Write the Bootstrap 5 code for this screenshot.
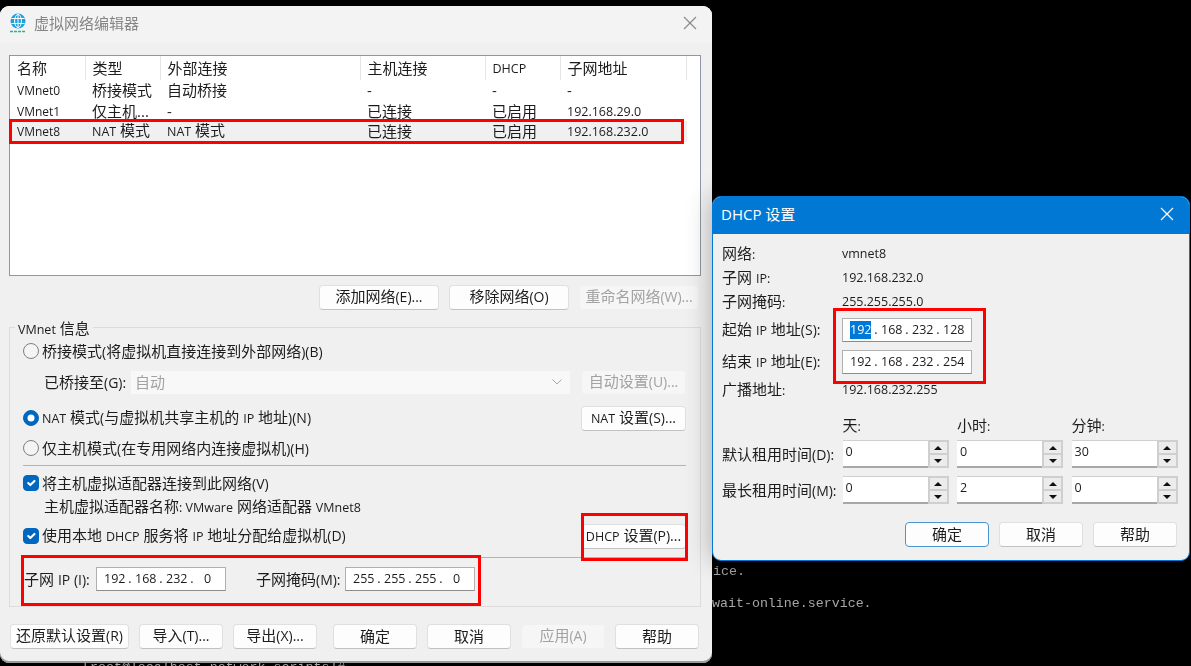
<!DOCTYPE html>
<html lang="zh-CN">
<head>
  <meta charset="UTF-8">
  <title>虚拟网络编辑器</title>
  <link href="https://cdn.jsdelivr.net/npm/bootstrap@5.3.0/dist/css/bootstrap.min.css" rel="stylesheet">
  <style>
    html, body { height: 100%; }
    body {
      background: #000; overflow: hidden; color: #1c1c1c;
      font-family: "Open Sans", "Noto Sans CJK SC", sans-serif; font-size: 15px; line-height: 20px;
    }
    .lat { font-size: 12.5px; }
    .lat-s { font-size: 12px; }
    .acc { font-size: 14px; }

    /* the whole screenshot is a little soft */
    .win, .term-line { filter: blur(.3px); }

    /* desktop */
    .term-line { position: absolute; color: #a6a6a6; font: 13.3px/16px "Liberation Mono", monospace; white-space: pre; }
    .term-a { left: 713px; top: 564px; }
    .term-b { left: 712px; top: 596px; }
    .term-c { left: 82px; top: 660px; }
    .win { position: absolute; background: #f0f0f0; }
    .win-main { left: 0; top: 6px; width: 712px; height: 657px; border-radius: 9px; overflow: hidden; box-shadow: inset 0 -2px 0 #9a9a9a; }
    .win-dhcp { left: 712px; top: 196px; width: 478px; height: 365px; border-radius: 9px; overflow: hidden; border: 1px solid #0078d4; box-shadow: 0 0 26px rgba(0,0,0,.3); }
    .title-main { height: 37px; background: #f3f3f3; color: #858585; padding: 0 15px 3px 10px; }
    .title-dhcp { height: 37px; background: #0078d4; color: #fff; padding: 0 15px 3px 8px; }
    .title-text-main { margin-left: 8px; }
    .close-x { display: block; }

    /* main window */
    .main-body { padding: 12px 11px 0 9px; }
    .net-list { height: 221px; background: #fff; border: 1px solid #8f97a6; }
    .net-table { table-layout: fixed; width: 677px; margin: 0; border-collapse: collapse; white-space: nowrap; }
    .net-table th, .net-table td { padding: 0 0 0 7px; font-weight: 400; overflow: hidden; }
    .net-table th { height: 24px; border-right: 1px solid #e5e5e5; }
    .net-table td { height: 20.5px; line-height: 16px; }
    .net-table .sel-row td { background: #f0f0f0; }
    .col-name { width: 75px; }
    .col-kind { width: 75px; }
    .col-ext { width: 200px; }
    .col-host { width: 125px; }
    .col-dhcp { width: 75px; }

    .win-btn {
      height: 25px; padding: 0 0 2px; background: #fdfdfd; color: #1c1c1c; font-size: 15px; line-height: 20px;
      border: 1px solid #e0e0e0; border-bottom-color: #c2c2c2; border-radius: 4px; white-space: nowrap;
    }
    .win-btn:disabled { background: #f6f6f6; color: #a2a2a2; border-color: #f0f0f0; opacity: 1; }
    .win-btn-def { border: 1.5px solid #4a94d0; }
    .w-120 { width: 120px; }
    .w-119 { width: 119px; }
    .w-105 { width: 105px; }
    .w-84 { width: 84px; }
    .list-actions { margin: 9px 2px 0 0; gap: 10px; }

    .group-box { position: relative; height: 280px; margin-top: 17px; border: 1px solid #dcdcdc; padding: 11px 14px 0 13px; }
    .group-legend { position: absolute; left: 5px; top: -10px; padding: 0 3px; background: #f0f0f0; }
    .opt-row { height: 24px; }
    .opt-input.form-check-input { width: 16px; height: 16px; margin: 0 3px 0 0; flex: none; background-color: #f4f4f4; border: 1.5px solid #7f7f7f; }
    .opt-input.form-check-input:checked { background-color: #0067c0; border-color: #0067c0; }
    .opt-input[type=checkbox] { border-radius: 4px; }
    .mt-7 { margin-top: 7px; }
    .mt-12 { margin-top: 12px; }
    .mt-6 { margin-top: 6px; }
    .mt-5p { margin-top: 5px; }
    .indent { padding-left: 21px; }
    .sep-line { height: 1px; background: #b4b4b4; margin: 5px 0; opacity: 1; }
    .sep-low { margin: 9px 0 9px; }
    .lbl-bridge { width: 87px; flex: none; }
    .fake-select { width: 439px; height: 23px; padding-left: 4px; background: #f8f8f8; color: #a2a2a2; }
    .ip-box { width: 130px; height: 24px; padding-left: 7px; background: #fff; border: 1px solid #b0b0b0; border-bottom-color: #8c8c8c; font-size: 12.5px; }
    .octet { width: 21px; text-align: center; }
    .octet-dot { width: 10px; text-align: center; }
    .octet-sel { background: #0078d7; color: #fff; line-height: 18px; }
    .subnet-row { margin-left: 1px; }
    .lbl-ip { width: 72px; white-space: nowrap; }
    .lbl-mask { width: 89px; margin-left: 30px; white-space: nowrap; }
    .main-footer { margin-top: 17px; padding-left: 1px; gap: 10px; }
    .gap-extra { margin-left: 6px; }

    /* red marks drawn on the screenshot */
    .red-box { position: absolute; border: 3px solid #f00; pointer-events: none; }
    .red-row { left: 9px; top: 113px; width: 675px; height: 25px; }
    .red-dhcp-btn { left: 581px; top: 507px; width: 107px; height: 48px; }
    .red-subnet { left: 21px; top: 549px; width: 460px; height: 51px; }
    .red-range { left: 120px; top: 111px; width: 153px; height: 76px; }

    /* dhcp window */
    .dhcp-body { padding: 8px 9px 0 9px; }
    .info-row { height: 24px; }
    .info-key { width: 120px; flex: none; }
    .info-val { font-size: 12.5px; }
    .mt-8p { margin-top: 8px; }
    .mt-4p { margin-top: 4px; }
    .lease-grid { display: grid; grid-template-columns: 112px 106px 106px 106px; column-gap: 8.5px; margin-top: 13px; align-items: center; }
    .lease-head { height: 25px; }
    .spin-wrap { height: 28px; background: #cfcfcf; }
    .spin-field { flex: 1; background: #fff; border-bottom: 2px solid #a8a8a8; padding: 1px 3px; font-size: 12.5px; margin: 1px 0 0; }
    .spin-btns { width: 21px; padding: 2px; gap: 2px; }
    .spin-btn { flex: 1; background: #ececec; }
    .tri-up { width: 0; height: 0; border: 4.5px solid transparent; border-top: 0; border-bottom: 4.5px solid #111; }
    .tri-down { width: 0; height: 0; border: 4.5px solid transparent; border-bottom: 0; border-top: 4.5px solid #111; }
    .row-gap { margin-top: 8px; }
    .lease-label { white-space: nowrap; }
    .dhcp-footer { margin: 18px 3px 0 0; gap: 10px; }
  </style>
</head>
<body>
  <div class="term-line term-a">ice.</div>
  <div class="term-line term-b">wait-online.service.</div>
  <div class="term-line term-c">[root@localhost network-scripts]#</div>

  <div class="win win-main">
    <div class="title-main d-flex align-items-center">
      <svg width="16" height="20" viewBox="0 0 16 20">
        <circle cx="8" cy="8" r="7.5" fill="#1aa0dc"/>
        <ellipse cx="8" cy="8" rx="3.4" ry="6.6" fill="none" stroke="#fff" stroke-width="1"/>
        <path d="M1.4 5.500h13.2M1.4 10.500h13.2M8 1v14" stroke="#fff" stroke-width="1" fill="none"/>
        <path d="M0 18.500h16" stroke="#3aa99a" stroke-width="1.6" stroke-dasharray="3 1" fill="none"/>
      </svg>
      <span class="title-text-main flex-grow-1">虚拟网络编辑器</span>
      <svg class="close-x" width="14" height="14" viewBox="0 0 14 14"><path d="M1 1l12 12M13 1L1 13" stroke="#8a8a8a" stroke-width="1.2" fill="none"/></svg>
    </div>

    <div class="main-body">
      <div class="net-list">
        <table class="net-table">
          <colgroup>
            <col class="col-name"><col class="col-kind"><col class="col-ext"><col class="col-host"><col class="col-dhcp"><col>
          </colgroup>
          <thead>
            <tr><th>名称</th><th>类型</th><th>外部连接</th><th>主机连接</th><th><span class="lat">DHCP</span></th><th>子网地址</th></tr>
          </thead>
          <tbody>
            <tr><td><span class="lat-s">VMnet0</span></td><td>桥接模式</td><td>自动桥接</td><td>-</td><td>-</td><td>-</td></tr>
            <tr><td><span class="lat-s">VMnet1</span></td><td>仅主机...</td><td>-</td><td>已连接</td><td>已启用</td><td><span class="lat">192.168.29.0</span></td></tr>
            <tr class="sel-row"><td><span class="lat-s">VMnet8</span></td><td><span class="lat">NAT</span> 模式</td><td><span class="lat">NAT</span> 模式</td><td>已连接</td><td>已启用</td><td><span class="lat">192.168.232.0</span></td></tr>
          </tbody>
        </table>
      </div>

      <div class="list-actions d-flex justify-content-end">
        <button class="btn win-btn w-120">添加网络<span class="acc">(E)...</span></button>
        <button class="btn win-btn w-120">移除网络<span class="acc">(O)</span></button>
        <button class="btn win-btn w-120" disabled>重命名网络<span class="acc">(W)...</span></button>
      </div>

      <div class="group-box">
        <span class="group-legend"><span class="lat">VMnet</span> 信息</span>

        <div class="opt-row d-flex align-items-center">
          <input class="form-check-input opt-input" type="radio" name="mode">
          <span>桥接模式<span class="acc">(</span>将虚拟机直接连接到外部网络<span class="acc">)(B)</span></span>
        </div>
        <div class="opt-row indent mt-7 d-flex align-items-center">
          <span class="lbl-bridge">已桥接至<span class="acc">(G):</span></span>
          <div class="fake-select d-flex align-items-center justify-content-between">
            <span>自动</span>
            <svg width="10" height="6" viewBox="0 0 10 6" class="me-2"><path d="M.5.5L5 5 9.500.5" stroke="#a8a8a8" fill="none"/></svg>
          </div>
          <button class="btn win-btn w-105 ms-auto" disabled>自动设置<span class="acc">(U)...</span></button>
        </div>
        <div class="opt-row mt-12 d-flex align-items-center">
          <input class="form-check-input opt-input" type="radio" name="mode" checked>
          <span><span class="lat">NAT</span> 模式<span class="acc">(</span>与虚拟机共享主机的 <span class="lat">IP</span> 地址<span class="acc">)(N)</span></span>
          <button class="btn win-btn w-105 ms-auto"><span class="lat">NAT</span> 设置<span class="acc">(S)...</span></button>
        </div>
        <div class="opt-row mt-6 d-flex align-items-center">
          <input class="form-check-input opt-input" type="radio" name="mode">
          <span>仅主机模式<span class="acc">(</span>在专用网络内连接虚拟机<span class="acc">)(H)</span></span>
        </div>

        <div class="sep-line"></div>

        <div class="opt-row d-flex align-items-center">
          <input class="form-check-input opt-input" type="checkbox" checked>
          <span>将主机虚拟适配器连接到此网络<span class="acc">(V)</span></span>
        </div>
        <div class="opt-row indent d-flex align-items-center">
          <span>主机虚拟适配器名称<span class="lat">: VMware</span> 网络适配器 <span class="lat">VMnet8</span></span>
        </div>
        <div class="opt-row mt-5p d-flex align-items-center">
          <input class="form-check-input opt-input" type="checkbox" checked>
          <span>使用本地 <span class="lat">DHCP</span> 服务将 <span class="lat">IP</span> 地址分配给虚拟机<span class="acc">(D)</span></span>
          <button class="btn win-btn w-105 ms-auto"><span class="lat">DHCP</span> 设置<span class="acc">(P)...</span></button>
        </div>

        <div class="sep-line sep-low"></div>

        <div class="subnet-row d-flex align-items-center">
          <span class="lbl-ip">子网 <span class="acc">IP (I):</span></span>
          <div class="ip-box d-flex align-items-center">
            <span class="octet">192</span><span class="octet-dot">.</span><span class="octet">168</span><span class="octet-dot">.</span><span class="octet">232</span><span class="octet-dot">.</span><span class="octet">0</span>
          </div>
          <span class="lbl-mask">子网掩码<span class="acc">(M):</span></span>
          <div class="ip-box d-flex align-items-center">
            <span class="octet">255</span><span class="octet-dot">.</span><span class="octet">255</span><span class="octet-dot">.</span><span class="octet">255</span><span class="octet-dot">.</span><span class="octet">0</span>
          </div>
        </div>
      </div>

      <div class="main-footer d-flex">
        <button class="btn win-btn w-119">还原默认设置<span class="acc">(R)</span></button>
        <button class="btn win-btn w-84">导入<span class="acc">(T)...</span></button>
        <button class="btn win-btn w-84">导出<span class="acc">(X)...</span></button>
        <button class="btn win-btn w-84 gap-extra">确定</button>
        <button class="btn win-btn w-84">取消</button>
        <button class="btn win-btn w-84" disabled>应用<span class="acc">(A)</span></button>
        <button class="btn win-btn w-84">帮助</button>
      </div>
    </div>

    <div class="red-box red-row"></div>
    <div class="red-box red-dhcp-btn"></div>
    <div class="red-box red-subnet"></div>
  </div>

  <div class="win win-dhcp">
    <div class="title-dhcp d-flex align-items-center justify-content-between">
      <span>DHCP 设置</span>
      <svg class="close-x" width="14" height="14" viewBox="0 0 14 14"><path d="M1 1l12 12M13 1L1 13" stroke="#fff" stroke-width="1.2" fill="none"/></svg>
    </div>

    <div class="dhcp-body">
      <div class="info-row d-flex align-items-center"><span class="info-key">网络<span class="lat">:</span></span><span class="info-val">vmnet8</span></div>
      <div class="info-row d-flex align-items-center"><span class="info-key">子网 <span class="lat">IP:</span></span><span class="info-val">192.168.232.0</span></div>
      <div class="info-row d-flex align-items-center"><span class="info-key">子网掩码<span class="lat">:</span></span><span class="info-val">255.255.255.0</span></div>
      <div class="info-row mt-4p d-flex align-items-center">
        <span class="info-key">起始 <span class="lat">IP</span> 地址<span class="acc">(S):</span></span>
        <div class="ip-box d-flex align-items-center">
          <span class="octet octet-sel">192</span><span class="octet-dot">.</span><span class="octet">168</span><span class="octet-dot">.</span><span class="octet">232</span><span class="octet-dot">.</span><span class="octet">128</span>
        </div>
      </div>
      <div class="info-row mt-8p d-flex align-items-center">
        <span class="info-key">结束 <span class="lat">IP</span> 地址<span class="acc">(E):</span></span>
        <div class="ip-box d-flex align-items-center">
          <span class="octet">192</span><span class="octet-dot">.</span><span class="octet">168</span><span class="octet-dot">.</span><span class="octet">232</span><span class="octet-dot">.</span><span class="octet">254</span>
        </div>
      </div>
      <div class="info-row mt-4p d-flex align-items-center"><span class="info-key">广播地址<span class="lat">:</span></span><span class="info-val">192.168.232.255</span></div>

      <div class="lease-grid">
        <span></span><span class="lease-head">天<span class="lat">:</span></span><span class="lease-head">小时<span class="lat">:</span></span><span class="lease-head">分钟<span class="lat">:</span></span>

        <span class="lease-label">默认租用时间<span class="acc">(D):</span></span>
        <div class="spin-wrap d-flex"><div class="spin-field">0</div><div class="spin-btns d-flex flex-column"><div class="spin-btn d-flex align-items-center justify-content-center"><i class="tri-up"></i></div><div class="spin-btn d-flex align-items-center justify-content-center"><i class="tri-down"></i></div></div></div>
        <div class="spin-wrap d-flex"><div class="spin-field">0</div><div class="spin-btns d-flex flex-column"><div class="spin-btn d-flex align-items-center justify-content-center"><i class="tri-up"></i></div><div class="spin-btn d-flex align-items-center justify-content-center"><i class="tri-down"></i></div></div></div>
        <div class="spin-wrap d-flex"><div class="spin-field">30</div><div class="spin-btns d-flex flex-column"><div class="spin-btn d-flex align-items-center justify-content-center"><i class="tri-up"></i></div><div class="spin-btn d-flex align-items-center justify-content-center"><i class="tri-down"></i></div></div></div>

        <span class="lease-label row-gap">最长租用时间<span class="acc">(M):</span></span>
        <div class="spin-wrap row-gap d-flex"><div class="spin-field">0</div><div class="spin-btns d-flex flex-column"><div class="spin-btn d-flex align-items-center justify-content-center"><i class="tri-up"></i></div><div class="spin-btn d-flex align-items-center justify-content-center"><i class="tri-down"></i></div></div></div>
        <div class="spin-wrap row-gap d-flex"><div class="spin-field">2</div><div class="spin-btns d-flex flex-column"><div class="spin-btn d-flex align-items-center justify-content-center"><i class="tri-up"></i></div><div class="spin-btn d-flex align-items-center justify-content-center"><i class="tri-down"></i></div></div></div>
        <div class="spin-wrap row-gap d-flex"><div class="spin-field">0</div><div class="spin-btns d-flex flex-column"><div class="spin-btn d-flex align-items-center justify-content-center"><i class="tri-up"></i></div><div class="spin-btn d-flex align-items-center justify-content-center"><i class="tri-down"></i></div></div></div>
      </div>

      <div class="dhcp-footer d-flex justify-content-end">
        <button class="btn win-btn w-84 win-btn-def">确定</button>
        <button class="btn win-btn w-84">取消</button>
        <button class="btn win-btn w-84">帮助</button>
      </div>
    </div>

    <div class="red-box red-range"></div>
  </div>

  <script src="https://cdn.jsdelivr.net/npm/bootstrap@5.3.0/dist/js/bootstrap.bundle.min.js"></script>
</body>
</html>
